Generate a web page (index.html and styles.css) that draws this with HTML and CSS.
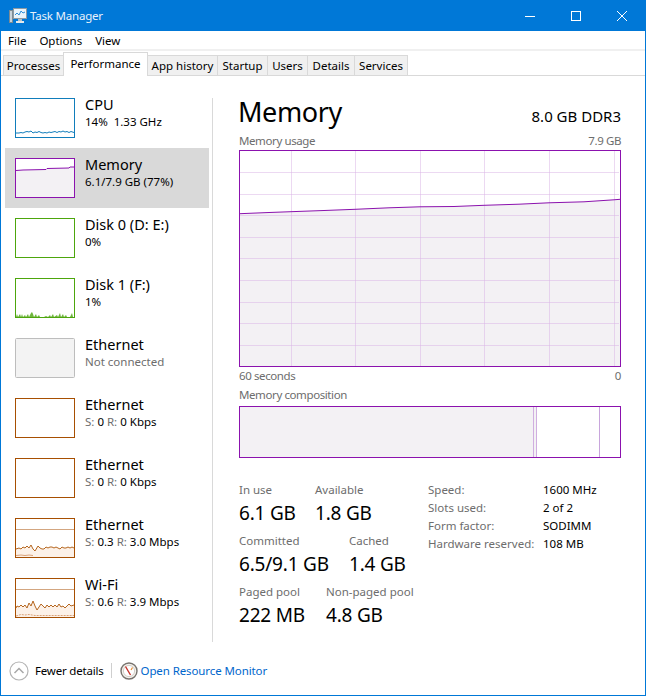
FILE: index.html
```html
<!DOCTYPE html>
<html lang="en">
<head>
    <meta charset="UTF-8">
    <title>Task Manager</title>
    <link rel="stylesheet" href="styles.css">
</head>
<body>
<div class="window">

    <!-- Title bar -->
    <div class="titlebar">
        <svg class="app-icon" width="18" height="16" viewBox="0 0 18 16">
            <rect x="0.5" y="2.5" width="3" height="12" fill="#c9d3da" stroke="#7d8b94"/>
            <rect x="4.5" y="0.5" width="13" height="10" fill="#eaf4fb" stroke="#8d9aa3"/>
            <polyline points="6,7 8,5 10,7 12,3 14,5 16,4" fill="none" stroke="#2f8fd8" stroke-width="1"/>
            <rect x="9" y="11" width="4" height="2" fill="#b7c1c8"/>
            <rect x="7" y="13" width="8" height="2" fill="#e4e9ec"/>
        </svg>
        <span class="app-title">Task Manager</span>
        <div class="controls">
            <div class="control">
                <svg width="10" height="10" viewBox="0 0 10 10"><line x1="0" y1="5.5" x2="10" y2="5.5" stroke="#fff"/></svg>
            </div>
            <div class="control">
                <svg width="10" height="10" viewBox="0 0 10 10"><rect x="0.5" y="0.5" width="9" height="9" fill="none" stroke="#fff"/></svg>
            </div>
            <div class="control">
                <svg width="10" height="10" viewBox="0 0 10 10"><path d="M0 0L10 10M10 0L0 10" fill="none" stroke="#fff"/></svg>
            </div>
        </div>
    </div>

    <!-- Menu -->
    <div class="menu">
        <span>File</span>
        <span>Options</span>
        <span>View</span>
    </div>

    <!-- Tabs -->
    <div class="tabs">
        <div class="tab tab-processes">Processes</div>
        <div class="tab tab-performance active">Performance</div>
        <div class="tab tab-history">App history</div>
        <div class="tab tab-startup">Startup</div>
        <div class="tab tab-users">Users</div>
        <div class="tab tab-details">Details</div>
        <div class="tab tab-services">Services</div>
    </div>

    <div class="content">

        <!-- Left list -->
        <div class="sidebar">
            <div class="item">
                <svg class="thumb cpu" viewBox="0 0 60 40">
                    <polyline class="trace" points="1,35 4,35 6,34.500 8,35 10,34 12,33.500 14,34 16,33 18,35 20,34 22,34.500 24,33.500 26,34.500 28,35 30,34.500 32,35 34,34 36,34.500 38,34 40,33.500 42,34.500 44,33.500 46,34 48,33 50,34 52,33.500 54,34.500 56,33.500 59,34.500"/>
                    <rect class="frame" x="0.5" y="0.5" width="59" height="39"/>
                </svg>
                <div class="item-text">
                    <div class="item-name">CPU</div>
                    <div class="item-sub">14%&nbsp; 1.33 GHz</div>
                </div>
            </div>
            <div class="item selected">
                <svg class="thumb mem" viewBox="0 0 60 40">
                    <rect x="0" y="0" width="60" height="40" fill="#fff"/>
                    <polygon class="area" points="1,12.500 8,12 31,11.500 32,10.500 54,10 55,9 59,9 59,39 1,39"/>
                    <polyline class="trace" points="1,12.500 8,12 31,11.500 32,10.500 54,10 55,9 59,9"/>
                    <rect class="frame" x="0.5" y="0.5" width="59" height="39"/>
                </svg>
                <div class="item-text">
                    <div class="item-name">Memory</div>
                    <div class="item-sub">6.1/7.9 GB (77%)</div>
                </div>
            </div>
            <div class="item">
                <svg class="thumb disk" viewBox="0 0 60 40">
                    <rect class="frame" x="0.5" y="0.5" width="59" height="39"/>
                </svg>
                <div class="item-text">
                    <div class="item-name">Disk 0 (D: E:)</div>
                    <div class="item-sub">0%</div>
                </div>
            </div>
            <div class="item">
                <svg class="thumb disk" viewBox="0 0 60 40">
                    <polygon class="spikes" points="1,39 2,36 3,39 5,36 6,39 7,36 8,39 10,37 11,39 13,36 14,39 16,35 17,34 18,36 19,39 21,36 22,39 24,37 25,39 29,39 31,38 33,39 35,37 36,39 38,36 39,39 42,37 43,39 45,35 46,39 48,36 49,39 51,37 52,39 55,39 57,35 58,39"/>
                    <rect class="frame" x="0.5" y="0.5" width="59" height="39"/>
                </svg>
                <div class="item-text">
                    <div class="item-name">Disk 1 (F:)</div>
                    <div class="item-sub">1%</div>
                </div>
            </div>
            <div class="item">
                <svg class="thumb off" viewBox="0 0 60 40">
                    <rect class="frame" x="0.5" y="0.5" width="59" height="39" rx="1"/>
                </svg>
                <div class="item-text">
                    <div class="item-name">Ethernet</div>
                    <div class="item-sub muted">Not connected</div>
                </div>
            </div>
            <div class="item">
                <svg class="thumb net" viewBox="0 0 60 40">
                    <rect class="frame" x="0.5" y="0.5" width="59" height="39"/>
                </svg>
                <div class="item-text">
                    <div class="item-name">Ethernet</div>
                    <div class="item-sub"><span class="muted">S:</span> 0 <span class="muted">R:</span> 0 Kbps</div>
                </div>
            </div>
            <div class="item">
                <svg class="thumb net" viewBox="0 0 60 40">
                    <rect class="frame" x="0.5" y="0.5" width="59" height="39"/>
                </svg>
                <div class="item-text">
                    <div class="item-name">Ethernet</div>
                    <div class="item-sub"><span class="muted">S:</span> 0 <span class="muted">R:</span> 0 Kbps</div>
                </div>
            </div>
            <div class="item">
                <svg class="thumb net" viewBox="0 0 60 40">
                    <polygon class="area" points="1,31 4,30 6,31 8,29 10,30 12,28 14,30 16,27 18,31 20,33 23,28 25,30 27,31 29,31 31,29 33,30 35,29 37,29 39,30 41,29 43,30 45,31 47,29 49,30 51,30 53,29 55,30 57,29 59,30 59,39 1,39"/>
                    <line class="ceiling" x1="1" y1="11.500" x2="59" y2="11.500"/>
                    <polyline class="trace" points="1,31 4,30 6,31 8,29 10,30 12,28 14,30 16,27 18,31 20,33 23,28 25,30 27,31 29,31 31,29 33,30 35,29 37,29 39,30 41,29 43,30 45,31 47,29 49,30 51,30 53,29 55,30 57,29 59,30"/>
                    <polyline class="send" points="1,37.500 6,37 10,37.500 14,37 18,37.500"/>
                    <rect class="frame" x="0.5" y="0.5" width="59" height="39"/>
                </svg>
                <div class="item-text">
                    <div class="item-name">Ethernet</div>
                    <div class="item-sub"><span class="muted">S:</span> 0.3 <span class="muted">R:</span> 3.0 Mbps</div>
                </div>
            </div>
            <div class="item">
                <svg class="thumb net" viewBox="0 0 60 40">
                    <polygon class="area" points="1,30 2,28 4,29 6,27 8,29 10,27 12,30 14,25 16,28 18,23 20,28 22,32 24,29 26,26 28,28 30,30 32,27 34,29 36,27 38,29 40,27 42,29 44,26 46,29 48,28 50,30 52,28 54,26 56,28 59,27 59,39 1,39"/>
                    <line class="ceiling" x1="1" y1="11.500" x2="59" y2="11.500"/>
                    <polyline class="trace" points="1,30 2,28 4,29 6,27 8,29 10,27 12,30 14,25 16,28 18,23 20,28 22,32 24,29 26,26 28,28 30,30 32,27 34,29 36,27 38,29 40,27 42,29 44,26 46,29 48,28 50,30 52,28 54,26 56,28 59,27"/>
                    <polyline class="send dotted" points="1,38 6,36.500 10,37 14,36.500 20,37.500 59,37.500"/>
                    <rect class="frame" x="0.5" y="0.5" width="59" height="39"/>
                </svg>
                <div class="item-text">
                    <div class="item-name">Wi-Fi</div>
                    <div class="item-sub"><span class="muted">S:</span> 0.6 <span class="muted">R:</span> 3.9 Mbps</div>
                </div>
            </div>
        </div>

        <div class="divider"></div>

        <!-- Right panel -->
        <div class="main">
            <div class="header">
                <div class="title">Memory</div>
                <div class="hw">8.0 GB DDR3</div>
            </div>

            <div class="caption caption-usage">
                <span>Memory usage</span>
                <span>7.9 GB</span>
            </div>
            <svg class="graph" width="382" height="217" viewBox="0 0 382 217">
                <polygon class="graph-area" points="1,63.700 30,62.500 52,61.700 85,60.500 116,59.300 150,57.800 181,56.800 215,56.500 245,55.300 280,54.200 310,52.800 345,51.800 375,49.800 381,49.300 381,216 1,216"/>
                <g class="graph-grid">
                    <line x1="52.500" y1="1" x2="52.500" y2="216"/>
                    <line x1="116.500" y1="1" x2="116.500" y2="216"/>
                    <line x1="181.500" y1="1" x2="181.500" y2="216"/>
                    <line x1="245.500" y1="1" x2="245.500" y2="216"/>
                    <line x1="310.500" y1="1" x2="310.500" y2="216"/>
                    <line x1="375.500" y1="1" x2="375.500" y2="216"/>
                    <line x1="1" y1="22.500" x2="380" y2="22.500"/>
                    <line x1="1" y1="44.500" x2="380" y2="44.500"/>
                    <line x1="1" y1="65.500" x2="380" y2="65.500"/>
                    <line x1="1" y1="87.500" x2="380" y2="87.500"/>
                    <line x1="1" y1="108.500" x2="380" y2="108.500"/>
                    <line x1="1" y1="130.500" x2="380" y2="130.500"/>
                    <line x1="1" y1="152.500" x2="380" y2="152.500"/>
                    <line x1="1" y1="173.500" x2="380" y2="173.500"/>
                    <line x1="1" y1="195.500" x2="380" y2="195.500"/>
                </g>
                <polyline class="graph-trace" points="1,63.700 30,62.500 52,61.700 85,60.500 116,59.300 150,57.800 181,56.800 215,56.500 245,55.300 280,54.200 310,52.800 345,51.800 375,49.800 381,49.300"/>
                <rect class="graph-frame" x="0.500" y="0.500" width="381" height="216"/>
            </svg>
            <div class="caption caption-axis">
                <span>60 seconds</span>
                <span>0</span>
            </div>
            <div class="caption caption-comp">
                <span>Memory composition</span>
            </div>
            <div class="composition">
                <div class="comp-used"></div>
                <div class="comp-modified"></div>
                <div class="comp-standby"></div>
                <div class="comp-free"></div>
            </div>

            <div class="stats">
                <div class="stats-left">
                    <div class="stat-row">
                        <div class="stat w76"><div class="stat-label">In use</div><div class="stat-value">6.1 GB</div></div>
                        <div class="stat"><div class="stat-label">Available</div><div class="stat-value">1.8 GB</div></div>
                    </div>
                    <div class="stat-row">
                        <div class="stat w110"><div class="stat-label">Committed</div><div class="stat-value">6.5/9.1 GB</div></div>
                        <div class="stat"><div class="stat-label">Cached</div><div class="stat-value">1.4 GB</div></div>
                    </div>
                    <div class="stat-row">
                        <div class="stat w87"><div class="stat-label">Paged pool</div><div class="stat-value">222 MB</div></div>
                        <div class="stat"><div class="stat-label">Non-paged pool</div><div class="stat-value">4.8 GB</div></div>
                    </div>
                </div>
                <div class="specs">
                    <span class="spec-key">Speed:</span><span>1600 MHz</span>
                    <span class="spec-key">Slots used:</span><span>2 of 2</span>
                    <span class="spec-key">Form factor:</span><span>SODIMM</span>
                    <span class="spec-key">Hardware reserved:</span><span>108 MB</span>
                </div>
            </div>
        </div>
    </div>

    <!-- Footer -->
    <div class="footer">
        <svg class="chevron" width="20" height="20" viewBox="0 0 20 20">
            <circle cx="10" cy="10" r="9" fill="#fff" stroke="#b4b4b4" stroke-width="1.200"/>
            <polyline points="5.500,12 10,7.500 14.500,12" fill="none" stroke="#a8a8a8" stroke-width="1.500"/>
        </svg>
        <span class="fewer">Fewer details</span>
        <span class="sep"></span>
        <svg class="monitor-icon" width="18" height="18" viewBox="0 0 18 18">
            <circle cx="9" cy="9" r="8" fill="#f4f1ec" stroke="#77736e" stroke-width="1.400"/>
            <circle cx="9" cy="9" r="5.600" fill="#fff" stroke="#c9c4bc" stroke-width="0.800"/>
            <line x1="5.500" y1="4.500" x2="10.500" y2="13" stroke="#c8322a" stroke-width="1.400"/>
            <line x1="12.500" y1="5.500" x2="11" y2="8" stroke="#e8892c" stroke-width="1.200"/>
        </svg>
        <span class="link">Open Resource Monitor</span>
    </div>
</div>
</body>
</html>
```

FILE: styles.css
```css
/* General */
html, body {
    margin: 0;
    padding: 0;
}

body {
    font-family: "Noto Sans", "Open Sans", sans-serif;
    font-size: 11.5px;
    color: #000;
    background-color: #fff;
}

.window {
    width: 646px;
    height: 696px;
    box-sizing: border-box;
    border: 1px solid #0078d7;
    border-top: none;
    display: flex;
    flex-direction: column;
    overflow: hidden;
}

/* Title bar */
.titlebar {
    height: 31px;
    background-color: #0078d7;
    color: #fff;
    display: flex;
    align-items: center;
    flex-shrink: 0;
}

.app-icon {
    margin-left: 8px;
    margin-right: 3px;
}

.app-title {
    color: #e8f2fb;
    letter-spacing: -0.2px;
}

.controls {
    margin-left: auto;
    display: flex;
}

.control {
    width: 46px;
    height: 31px;
    display: flex;
    align-items: center;
    justify-content: center;
}

/* Menu */
.menu {
    height: 18px;
    flex-shrink: 0;
    display: flex;
    align-items: center;
    padding-left: 7px;
    gap: 13px;
    border-bottom: 2px solid #f0f0f0;
}

/* Tabs */
.tabs {
    height: 23px;
    margin-top: 1px;
    flex-shrink: 0;
    display: flex;
    align-items: flex-end;
    padding-left: 2px;
    border-bottom: 1px solid #d9d9d9;
}

.tab {
    height: 20px;
    box-sizing: border-box;
    background-color: #f0f0f0;
    border: 1px solid #d9d9d9;
    border-left: none;
    border-bottom: none;
    display: flex;
    align-items: center;
    justify-content: center;
}

.tab:first-child {
    border-left: 1px solid #d9d9d9;
}

.tab.active {
    height: 24px;
    margin-bottom: -1px;
    padding-bottom: 3px;
    background-color: #fff;
    border-left: 1px solid #d9d9d9;
}

.tab-processes { width: 61px; }
.tab-performance { width: 85px; margin-left: -1px; }
.tab-history { width: 70px; }
.tab-startup { width: 50px; }
.tab-users { width: 40px; }
.tab-details { width: 47px; }
.tab-services { width: 53px; }

/* Body of the window */
.content {
    flex: 1;
    display: flex;
    min-height: 0;
}

.sidebar {
    width: 208px;
    padding-top: 12px;
    padding-left: 4px;
    box-sizing: border-box;
}

.item {
    height: 60px;
    box-sizing: border-box;
    padding: 10px 0 0 10px;
    display: flex;
}

.item.selected {
    background-color: #d9d9d9;
}

.item-text {
    margin-left: 10px;
}

.item-name {
    font-size: 14.5px;
    line-height: 16px;
    margin-top: -2px;
}

.item-sub {
    font-size: 11.5px;
    line-height: 17px;
    margin-top: 1px;
}

.muted {
    color: #6d6d6d;
}

/* Thumbnails */
.thumb {
    width: 60px;
    height: 40px;
    flex-shrink: 0;
    display: block;
}

.frame { fill: none; stroke-width: 1; }
.trace { fill: none; stroke-width: 1; }

.cpu .frame, .cpu .trace { stroke: #117dbb; }
.mem .frame, .mem .trace { stroke: #8b12ae; }
.mem .area { fill: #f3f1f4; }
.disk .frame { stroke: #4da60c; }
.spikes { fill: #6fb63d; }
.off .frame { fill: #f3f3f3; stroke: #bdbdbd; }
.net .frame { stroke: #a74f01; }
.net .trace { stroke: #b5661f; }
.net .area { fill: #fcf1e8; }
.ceiling { stroke: #d3a680; stroke-width: 1; }
.send { fill: none; stroke: #d9a27a; stroke-width: 1; }
.dotted { stroke-dasharray: 2 1; }

.divider {
    width: 1px;
    margin: 22px 0 12px 3px;
    background-color: #d9d9d9;
}

/* Right panel */
.main {
    flex: 1;
    padding: 0 24px 0 26px;
    min-width: 0;
}

.header {
    display: flex;
    justify-content: space-between;
    align-items: baseline;
    height: 56px;
}

.title {
    font-size: 27px;
    line-height: 72px;
    margin-left: -1px;
    letter-spacing: -0.4px;
}

.hw {
    font-size: 15px;
}

.caption {
    display: flex;
    justify-content: space-between;
    color: #6d6d6d;
    line-height: 16px;
    letter-spacing: -0.4px;
}

.caption-usage {
    margin-top: 1px;
    height: 17px;
}

.graph {
    display: block;
}

.graph-area { fill: #f3f1f4; }
.graph-grid line { stroke: #d9b3e6; stroke-opacity: 0.5; stroke-width: 1; }
.graph-trace { fill: none; stroke: #8b12ae; stroke-width: 1; }
.graph-frame { fill: none; stroke: #8b12ae; stroke-width: 1; }

.caption-axis {
    margin-top: 1px;
    height: 18px;
}

.caption-comp {
    margin-top: 1px;
    height: 19px;
}

.composition {
    height: 52px;
    box-sizing: border-box;
    border: 1px solid #8b12ae;
    display: flex;
}

.comp-used {
    width: 293px;
    background-color: #f3f1f4;
    border-right: 1px solid #d0aee0;
}

.comp-modified {
    width: 2px;
    background-color: #f3f1f4;
    border-right: 1px solid #d0aee0;
}

.comp-standby {
    width: 62px;
    border-right: 1px solid #c8a5dc;
}

.comp-free {
    flex: 1;
}

/* Numbers under the graphs */
.stats {
    display: flex;
    margin-top: 24px;
}

.stats-left {
    width: 189px;
}

.stat-row {
    display: flex;
    height: 51px;
}

.stat.w76 { width: 76px; }
.stat.w110 { width: 110px; }
.stat.w87 { width: 87px; }

.stat-label {
    color: #6d6d6d;
    line-height: 16px;
}

.stat-value {
    font-size: 19px;
    line-height: 28px;
    margin-top: 1px;
    letter-spacing: -0.2px;
    white-space: nowrap;
}

.specs {
    display: grid;
    grid-template-columns: 115px auto;
    grid-auto-rows: 18px;
    line-height: 16px;
    align-self: flex-start;
}

.spec-key {
    color: #6d6d6d;
    white-space: nowrap;
}

/* Footer */
.footer {
    height: 41px;
    flex-shrink: 0;
    display: flex;
    align-items: center;
    padding-bottom: 8px;
    box-sizing: border-box;
    padding-left: 8px;
}

.chevron {
    margin-right: 6px;
}

.fewer {
    letter-spacing: -0.2px;
}

.sep {
    width: 1px;
    height: 15px;
    background-color: #cfcfcf;
    margin: 0 8px 0 7px;
}

.monitor-icon {
    margin-right: 3px;
}

.link {
    color: #0066cc;
    letter-spacing: -0.1px;
}
```
